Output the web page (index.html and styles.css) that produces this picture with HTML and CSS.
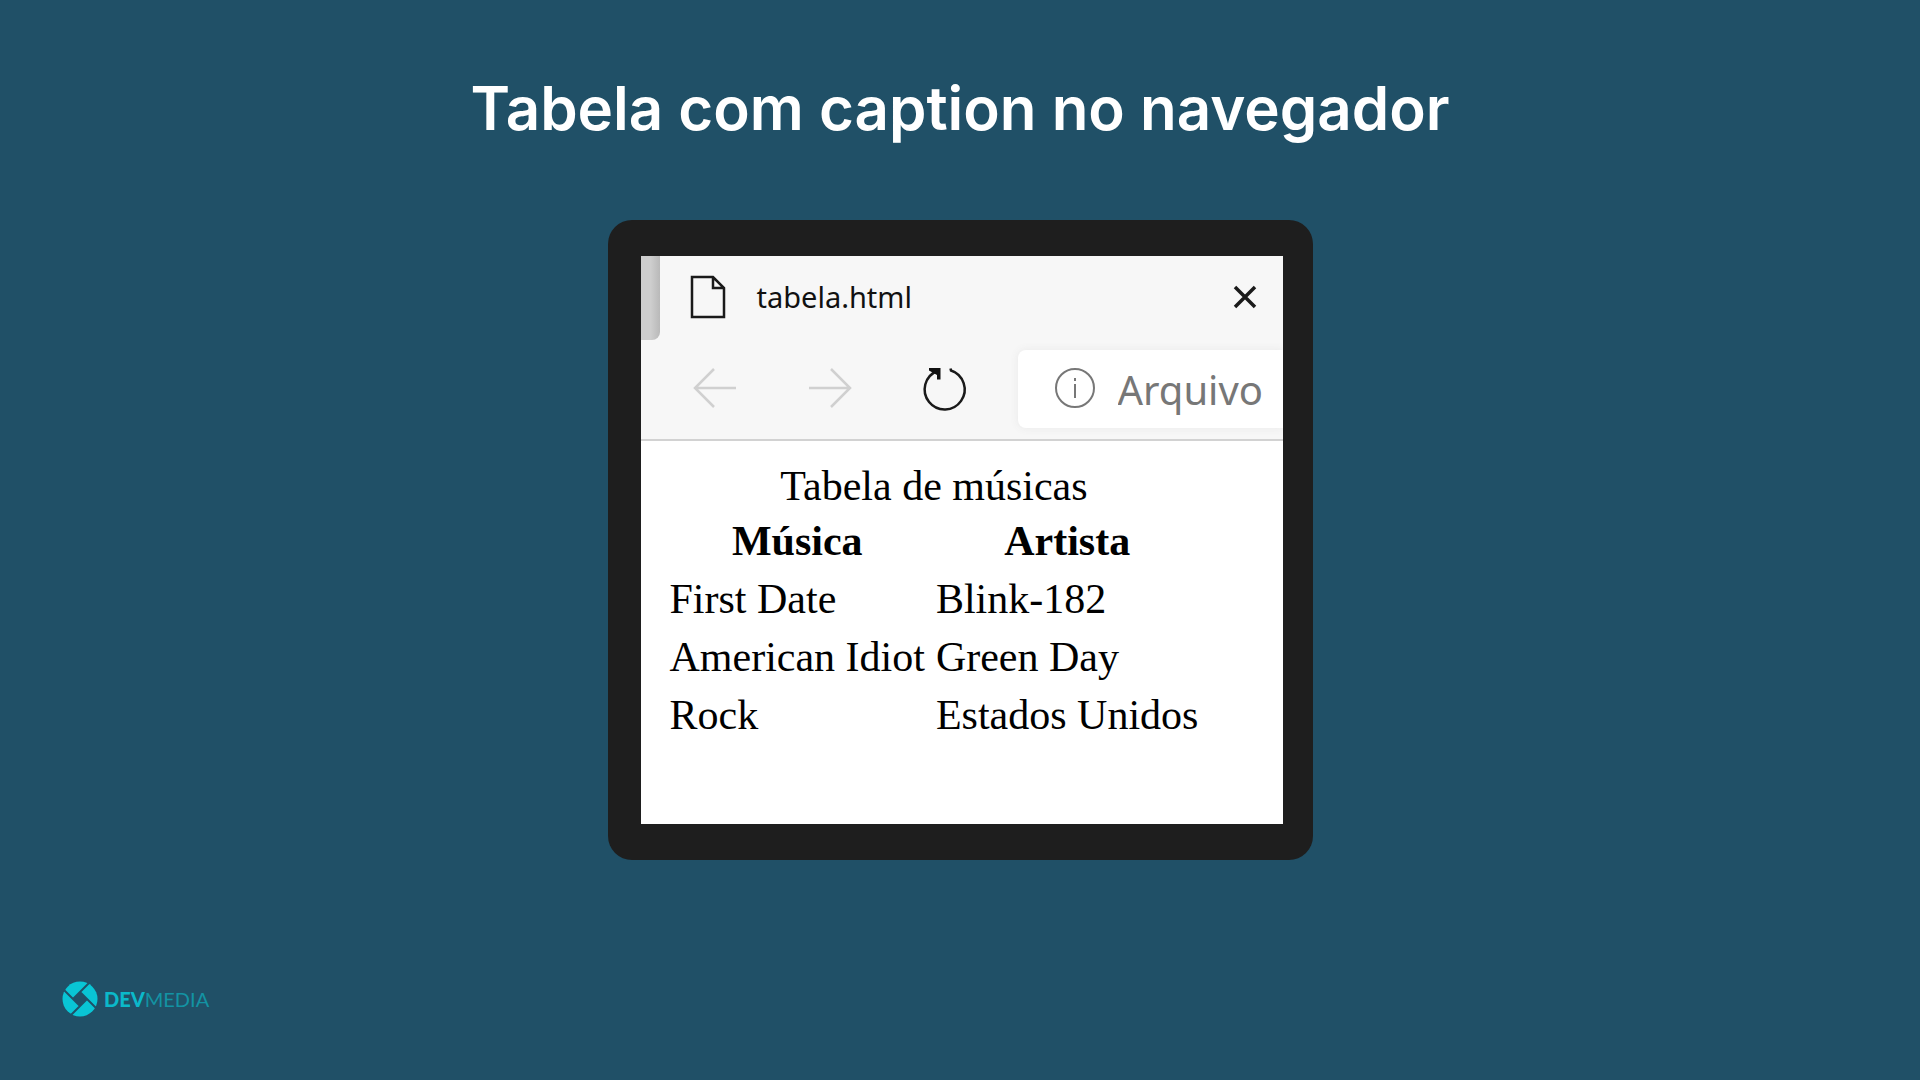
FILE: index.html
```html
<!DOCTYPE html>
<html lang="pt-BR">
<head>
<meta charset="utf-8">
<meta name="viewport" content="width=device-width, initial-scale=1">
<title>Tabela com caption no navegador</title>
<link rel="stylesheet" href="styles.css">
</head>
<body>
<main class="slide">
  <h1 class="title">Tabela com caption no navegador</h1>

  <section class="frame" aria-label="Navegador">
    <div class="browser">
      <div class="tabs">
        <span class="tab-previous"></span>
        <div class="tab">
          <svg class="icon-file" viewBox="0 0 36 44" aria-hidden="true"><path d="M2 2H23L34 13V42H2ZM23 2V13H34"/></svg>
          <span class="tab-name">tabela.html</span>
          <button class="tab-close" type="button" aria-label="Fechar guia">
            <svg class="icon-close" viewBox="0 0 24 24" aria-hidden="true"><path d="M2 2L22 22M22 2L2 22"/></svg>
          </button>
        </div>
      </div>
      <div class="toolbar">
        <div class="nav">
          <button class="nav-button" type="button" aria-label="Voltar" disabled>
            <svg class="icon-nav" viewBox="0 0 44 44" aria-hidden="true"><path d="M43 21H2M21 2L2 21L21 40"/></svg>
          </button>
          <button class="nav-button" type="button" aria-label="Avançar" disabled>
            <svg class="icon-nav" viewBox="0 0 44 44" aria-hidden="true"><path d="M1 21H42M23 2L42 21L23 40"/></svg>
          </button>
          <button class="nav-button" type="button" aria-label="Atualizar">
            <svg class="icon-nav" viewBox="0 0 44 44" aria-hidden="true"><path d="M27.500 1.500L28 3.500A20 20 0 1 1 14 4"/><path class="solid" d="M6 1H17.500V12.500H14V8L6 3.500Z"/></svg>
          </button>
        </div>
        <label class="address">
          <svg class="icon-info" viewBox="0 0 42 42" aria-hidden="true"><circle cx="21" cy="20" r="19"/><path d="M21 16V30M21 10V13"/></svg>
          <input class="address-input" type="text" value="Arquivo" aria-label="Endereço">
        </label>
      </div>
      <div class="page">
        <table class="songs">
          <caption>Tabela de músicas</caption>
          <thead>
            <tr><th scope="col">Música</th><th scope="col">Artista</th></tr>
          </thead>
          <tbody>
            <tr><td>First Date</td><td>Blink-182</td></tr>
            <tr><td>American Idiot</td><td>Green Day</td></tr>
            <tr><td>Rock</td><td>Estados Unidos</td></tr>
          </tbody>
        </table>
      </div>
    </div>
  </section>

  <footer class="brand">
    <svg class="brand-mark" viewBox="0 0 36 36" aria-hidden="true">
      <circle cx="18" cy="18" r="17.500"/>
      <path class="hole" d="M18 11L25 18L18 25L11 18Z"/>
      <path class="cut" d="M11 18L27 2M18 11L34 27M25 18L9 34M18 25L2 9"/>
    </svg>
    <span class="brand-name"><b>DEV</b>MEDIA</span>
  </footer>
</main>
</body>
</html>
```
FILE: styles.css
```css
* {
  box-sizing: border-box;
}

body {
  margin: 0;
  background: #205067;
}

.slide {
  display: flex;
  flex-direction: column;
  align-items: center;
  min-height: 100vh;
  padding: 72px 62px 60px;
}

.title {
  margin: 0 0 76px;
  color: #fff;
  font: 600 60px/72px Inter, sans-serif;
  text-align: center;
}

.frame {
  width: 100%;
  max-width: 705px;
  padding: 36px 30px 36px 33px;
  border-radius: 24px;
  background: #1e1e1e;
}

.browser {
  overflow: hidden;
  background: #fff;
}

.tabs {
  display: flex;
  height: 84px;
  background: #f7f7f7;
}

.tab-previous {
  width: 19px;
  border-bottom-right-radius: 8px;
  background: linear-gradient(to right, #cecece 50%, #b9b9b9);
}

.tab {
  display: flex;
  flex: 1;
  align-items: center;
  padding: 0 26px 2px 30px;
}

.icon-file {
  width: 36px;
  height: 44px;
  margin-right: 31px;
  fill: none;
  stroke: #1a1a1a;
  stroke-width: 2.5;
}

.tab-name {
  color: #111;
  font: 29px/40px "Noto Sans", sans-serif;
}

button {
  display: flex;
  padding: 0;
  border: 0;
  background: none;
}

.tab-close {
  margin-left: auto;
}

.icon-close {
  width: 24px;
  height: 24px;
  fill: none;
  stroke: #1a1a1a;
  stroke-width: 3.5;
}

.toolbar {
  display: flex;
  align-items: center;
  padding: 10px 0 11px 52px;
  border-bottom: 2px solid #d2d2d2;
  background: #f7f7f7;
}

.nav {
  display: flex;
  gap: 71px;
  margin-right: 51px;
}

.icon-nav {
  width: 44px;
  height: 44px;
  overflow: visible;
  fill: none;
  stroke: #1a1a1a;
  stroke-width: 2.5;
}

.nav-button:disabled .icon-nav {
  stroke: #d0d0d0;
}

.icon-nav .solid {
  fill: #111;
  stroke: none;
}

.address {
  display: flex;
  flex: 1;
  align-items: center;
  min-width: 0;
  height: 78px;
  padding-left: 36px;
  border-radius: 8px 0 0 8px;
  background: #fff;
  box-shadow: 0 0 8px #e8e8e8;
}

.icon-info {
  flex: none;
  width: 42px;
  height: 42px;
  margin-right: 22px;
  fill: none;
  stroke: #777;
  stroke-width: 2;
}

.address-input {
  flex: 1;
  min-width: 0;
  padding: 2px 0 0;
  border: 0;
  outline: 0;
  background: none;
  color: #777;
  font: 40px/56px "Noto Sans", sans-serif;
}

.page {
  min-height: 383px;
  padding: 22px 21px;
}

.songs {
  border-spacing: 5px;
  color: #000;
  font: 42px/47px "Liberation Serif", serif;
}

.songs th,
.songs td {
  padding: 3px;
}

.brand {
  display: flex;
  align-self: flex-start;
  align-items: center;
  gap: 6px;
  margin-top: auto;
}

.brand-mark {
  width: 36px;
  height: 36px;
  fill: #09c5d5;
}

.brand-mark .hole {
  fill: #205067;
}

.brand-mark .cut {
  fill: none;
  stroke: #205067;
  stroke-width: 2;
}

.brand-name {
  color: #1393a3;
  font: 400 20px/42px Lato, sans-serif;
}

.brand-name b {
  color: #0bb9ca;
  font-weight: 900;
}
```
